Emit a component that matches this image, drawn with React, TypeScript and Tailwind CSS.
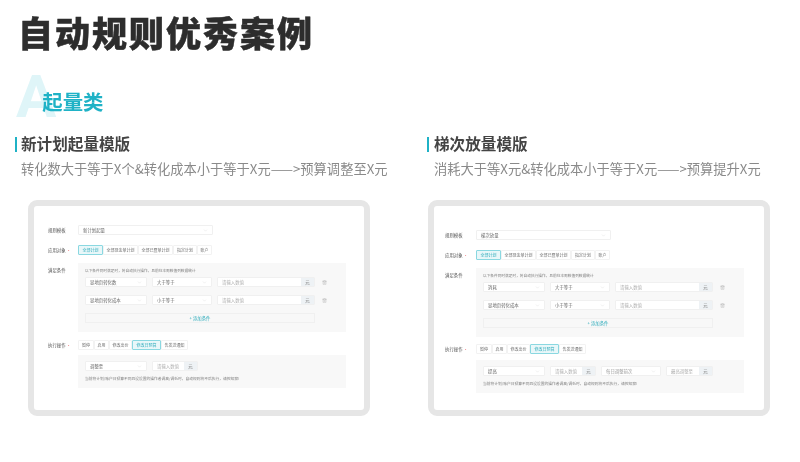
import React from 'react'
import { ChevronDown, Trash2 } from 'lucide-react'

const FONT = 'font-["Noto_Sans_CJK_SC","Noto_Sans",sans-serif]'

function Select({ text, className }: { text: string; className: string }) {
  return (
    <div className={`flex h-[10px] items-center justify-between rounded-[1px] border-[0.5px] border-[#f0f0f0] bg-white px-[4px] text-[#666] ${className}`}>
      <span>{text}</span>
      <ChevronDown size={5} strokeWidth={1} color="#bbb" />
    </div>
  )
}

function Input({ text, addon, className }: { text: string; addon: string; className: string }) {
  return (
    <div className={`flex h-[10px] items-stretch overflow-hidden rounded-[1px] border-[0.5px] border-[#f0f0f0] bg-white ${className}`}>
      <span className="flex flex-1 items-center px-[4px] text-[#b0b0b0]">{text}</span>
      <span className="flex w-[13px] items-center justify-center bg-[#eef2f5] text-[#777]">{addon}</span>
    </div>
  )
}

function Tabs({ items, active }: { items: { label: string; w: string }[]; active: number }) {
  return (
    <div className="flex h-[10px] w-fit text-[4px]">
      {items.map((item, i) => (
        <div
          key={item.label}
          className={`flex items-center justify-center rounded-[1px] border-[0.5px] ${item.w} ${
            i === active ? 'border-[#8ad8e1] bg-[#e9f7f9] text-[#35aebd]' : 'border-[#f2f2f2] bg-white text-[#707070]'
          }`}
        >
          {item.label}
        </div>
      ))}
    </div>
  )
}

function ConditionRow({ metric, op, unit }: { metric: string; op: string; unit: string }) {
  return (
    <div className="flex items-center">
      <Select text={metric} className="w-[62px]" />
      <Select text={op} className="ml-[5px] w-[60px]" />
      <Input text="请输入数值" addon={unit} className="ml-[5px] w-[98px]" />
      <Trash2 size={5} strokeWidth={1} color="#777" className="ml-[7px]" />
    </div>
  )
}

interface PanelProps {
  variant: 'left' | 'right'
  template: string
  metrics: [string, string]
  action: string
  second?: boolean
}

const targets = [
  { label: '全部计划', w: 'w-[25px]' },
  { label: '全部现金单计划', w: 'w-[35px]' },
  { label: '全部已暨单计划', w: 'w-[35px]' },
  { label: '指定计划', w: 'w-[24px]' },
  { label: '账户', w: 'w-[15px]' },
]

const actions = [
  { label: '暂停', w: 'w-[16px]' },
  { label: '启用', w: 'w-[15px]' },
  { label: '修改出价', w: 'w-[23px]' },
  { label: '修改日预算', w: 'w-[29px]' },
  { label: '告发送通知', w: 'w-[27px]' },
]

const HINT = '以下条件同时满足时，将自动执行操作，且前往本周数值列数据统计'
const NOTE = '当前符计划/账户日预算不同且没设置的操作者调高/调低时，自动规则将不后执行，请控知察!'

function RulePanel({ variant, template, metrics, action, second }: PanelProps) {
  const labelW = variant === 'left' ? 'w-[30px]' : 'w-[31px]'
  return (
    <div
      className={`h-[216px] w-[342px] rounded-[9px] border-[6px] border-[#e6e6e6] bg-white text-[4.4px] leading-none blur-[0.5px] ${
        variant === 'left' ? 'ml-[13px] pt-[19px] pl-[14px]' : 'ml-px pt-[24px] pl-[11px]'
      }`}
    >
      <div className="flex items-center">
        <span className={`${labelW} text-[#555]`}>规则模板</span>
        <Select text={template} className="w-[135px]" />
      </div>

      <div className="mt-[10px] flex items-center">
        <span className={`${labelW} text-[#555]`}>
          应用对象<span className="text-[#e5484d]"> •</span>
        </span>
        <Tabs items={targets} active={0} />
      </div>

      <div className="mt-[8px] flex items-start">
        <span className={`${labelW} pt-[5px] text-[#555]`}>满足条件</span>
        <div className="flex h-[69px] w-[268px] flex-col bg-[#f8f8f8] px-[7px] pt-[6px]">
          <span className="h-[8px] text-[3.7px] text-[#808080]">{HINT}</span>
          <div className="flex flex-col gap-[8px]">
            <ConditionRow metric={metrics[0]} op="大于等于" unit="元" />
            <ConditionRow metric={metrics[1]} op="小于等于" unit="元" />
          </div>
          <div className="mt-[8px] flex h-[10px] w-[230px] items-center justify-center border-[0.5px] border-[#f0f0f0] text-[#35aebd]">
            + 添加条件
          </div>
        </div>
      </div>

      <div className={`flex items-center ${variant === 'left' ? 'mt-[8px]' : 'mt-[7px]'}`}>
        <span className={`${labelW} text-[#555]`}>
          执行操作<span className="text-[#e5484d]"> •</span>
        </span>
        <Tabs items={actions} active={3} />
      </div>

      <div
        className={`flex h-[33px] w-[268px] flex-col bg-[#f8f8f8] px-[7px] pt-[6px] ${
          variant === 'left' ? 'mt-[5px] ml-[30px]' : 'mt-[6px] ml-[31px]'
        }`}
      >
        <div className="flex items-center">
          <Select text={action} className="w-[62px]" />
          <Input text="请输入数值" addon="元" className="ml-[5px] w-[46px]" />
          {second && (
            <>
              <Select text="每日调整前次" className="ml-[5px] w-[60px] text-[#999]" />
              <Input text="最高调整至" addon="元" className="ml-[5px] w-[47px]" />
            </>
          )}
        </div>
        <span className="mt-[6px] text-[3.75px] text-[#808080]">{NOTE}</span>
      </div>
    </div>
  )
}

function Variant({ title, desc, right, children }: { title: string; desc: string; right?: boolean; children: React.ReactNode }) {
  return (
    <div className={right ? 'w-[345px]' : 'w-[412px]'}>
      <div className="flex h-[16px] items-center">
        <span className="h-[15px] w-[2px] bg-[#1fb2c6]" />
        <h2 className={`text-[15.6px] leading-none font-bold text-[#444] blur-[0.3px] ${right ? 'ml-[5px]' : 'ml-[4px]'}`}>{title}</h2>
      </div>
      <p className={`mt-[9px] h-[15px] text-[13.27px] leading-[15px] whitespace-nowrap text-[#8a8a8a] blur-[0.3px] ${right ? 'ml-[7px]' : 'ml-[6px]'}`}>{desc}</p>
      <div className="mt-[24px]">{children}</div>
    </div>
  )
}

export default function App() {
  return (
    <div className={`h-[462px] w-[800px] overflow-hidden bg-white pl-[15px] ${FONT}`}>
      <h1 className="ml-[3px] h-[56px] pt-[10px] text-[35px] leading-[44px] font-black tracking-[2px] text-[#2d2d2d] blur-[0.3px] [-webkit-text-stroke:0.5px_#2d2d2d]">
        自动规则优秀案例
      </h1>

      <div className="mt-[8px] flex h-[72px] items-start">
        <span className="mt-[3px] ml-px font-['Roboto',sans-serif] text-[60px] leading-none font-bold text-[#dff5f8]">A</span>
        <span className="mt-[27px] -ml-[14px] text-[20.4px] leading-none font-bold text-[#1fb2c6] blur-[0.3px]">起量类</span>
      </div>

      <div className="flex">
        <Variant title="新计划起量模版" desc="转化数大于等于X个&转化成本小于等于X元——>预算调整至X元">
          <RulePanel variant="left" template="新计划起量" metrics={['显地页转化数', '显地页转化成本']} action="调整至" />
        </Variant>
        <Variant right title="梯次放量模版" desc="消耗大于等X元&转化成本小于等于X元——>预算提升X元">
          <RulePanel variant="right" template="梯次放量" metrics={['消耗', '显地页转化成本']} action="提高" second />
        </Variant>
      </div>
    </div>
  )
}
